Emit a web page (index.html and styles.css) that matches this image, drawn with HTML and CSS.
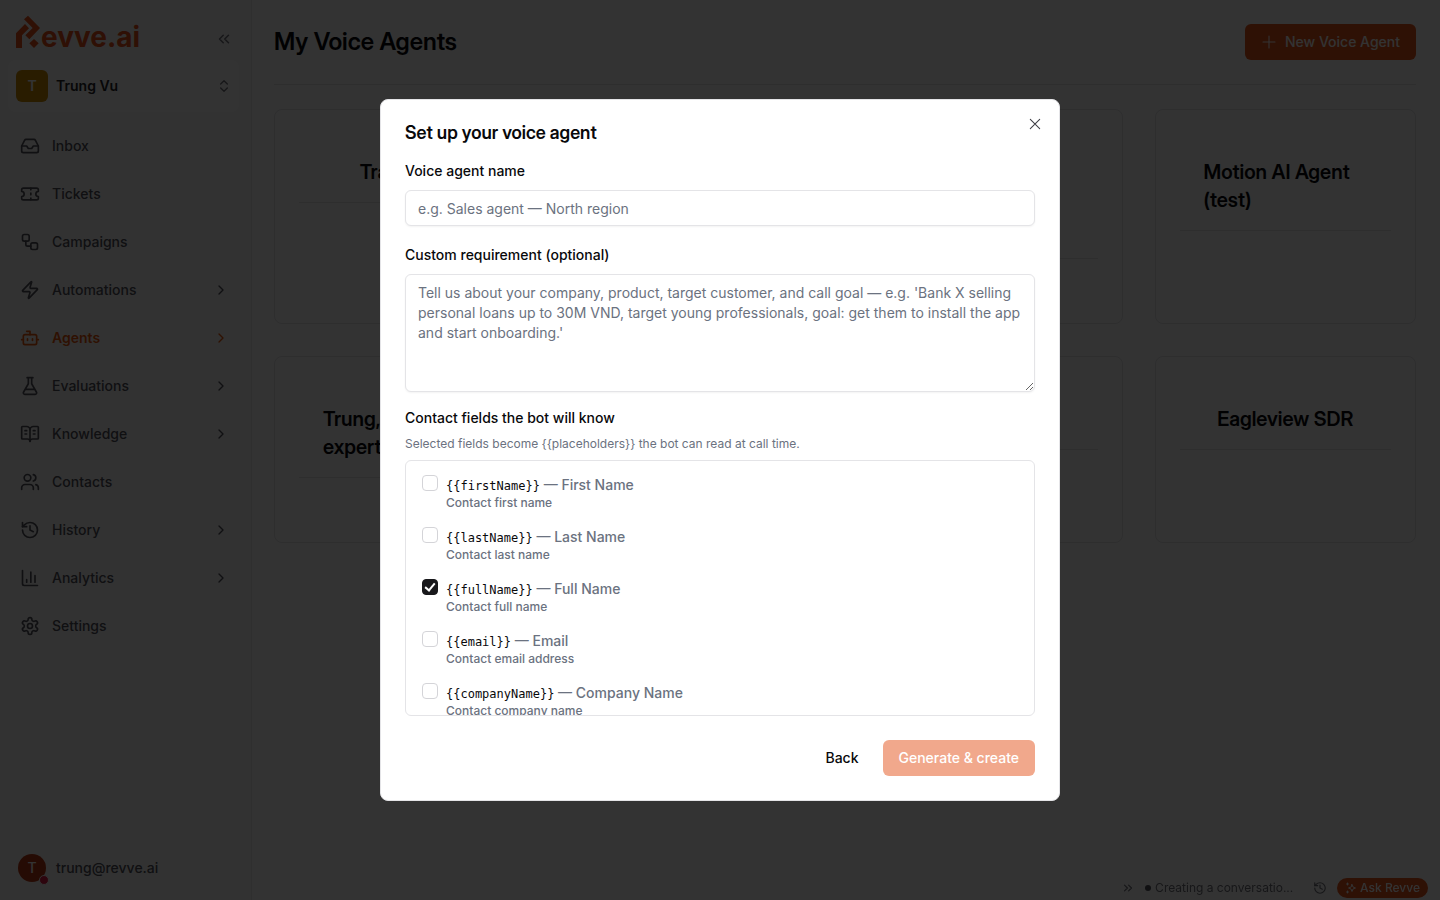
FILE: index.html
```html
<!DOCTYPE html>
<html lang="en">
<head>
  <meta charset="UTF-8" />
  <meta name="viewport" content="width=device-width, initial-scale=1" />
  <title>My Voice Agents</title>
  <link rel="stylesheet" href="styles.css">
</head>
<body>
  <div class="app">
    <aside class="sidebar">
      <div class="brand">
        <a href="#" class="logo">
          <svg viewBox="48 45 72 99" width="24" height="33"><path d="M72 58 84 47 120 84 88 118 76 106 98 84Z"/><path d="M75 72 87 85 66 106V144H48V100Z"/><path d="M102 117 116 130 102 144 88 130Z"/></svg>
          <span>evve.ai</span>
        </a>
        <button class="icon-btn" aria-label="Collapse sidebar">
          <svg class="icon" width="18" height="18" viewBox="0 0 24 24"><path d="m11 17-5-5 5-5M18 17l-5-5 5-5"/></svg>
        </button>
      </div>

      <button class="workspace">
        <span class="workspace-avatar">T</span>
        <span class="workspace-name">Trung Vu</span>
        <svg class="icon" width="16" height="16" viewBox="0 0 24 24"><path d="m7 15 5 5 5-5M7 9l5-5 5 5"/></svg>
      </button>

      <nav class="nav">
        <a href="#">
          <svg class="icon" width="20" height="20" viewBox="0 0 24 24"><path d="M22 12h-6l-2 3h-4l-2-3H2"/><path d="M5.45 5.11 2 12v6a2 2 0 0 0 2 2h16a2 2 0 0 0 2-2v-6l-3.45-6.89A2 2 0 0 0 16.76 4H7.24a2 2 0 0 0-1.79 1.11z"/></svg>
          <span>Inbox</span>
        </a>
        <a href="#">
          <svg class="icon" width="20" height="20" viewBox="0 0 24 24"><path d="M2 9a3 3 0 0 1 0 6v2a2 2 0 0 0 2 2h16a2 2 0 0 0 2-2v-2a3 3 0 0 1 0-6V7a2 2 0 0 0-2-2H4a2 2 0 0 0-2 2Z"/><path d="M13 5v2M13 17v2M13 11v2"/></svg>
          <span>Tickets</span>
        </a>
        <a href="#">
          <svg class="icon" width="20" height="20" viewBox="0 0 24 24"><rect width="8" height="8" x="3" y="3" rx="2"/><path d="M7 11v4a2 2 0 0 0 2 2h4"/><rect width="8" height="8" x="13" y="13" rx="2"/></svg>
          <span>Campaigns</span>
        </a>
        <a href="#">
          <svg class="icon" width="20" height="20" viewBox="0 0 24 24"><path d="M4 14a1 1 0 0 1-.78-1.63l9.9-10.2a.5.5 0 0 1 .86.46l-1.92 6.02A1 1 0 0 0 13 10h7a1 1 0 0 1 .78 1.63l-9.9 10.2a.5.5 0 0 1-.86-.46l1.92-6.02A1 1 0 0 0 11 14z"/></svg>
          <span>Automations</span>
          <svg class="icon" width="16" height="16" viewBox="0 0 24 24"><path d="m9 18 6-6-6-6"/></svg>
        </a>
        <a href="#" class="active">
          <svg class="icon" width="20" height="20" viewBox="0 0 24 24"><path d="M12 8V4H8"/><rect width="16" height="12" x="4" y="8" rx="2"/><path d="M2 14h2M20 14h2M15 13v2M9 13v2"/></svg>
          <span>Agents</span>
          <svg class="icon" width="16" height="16" viewBox="0 0 24 24"><path d="m9 18 6-6-6-6"/></svg>
        </a>
        <a href="#">
          <svg class="icon" width="20" height="20" viewBox="0 0 24 24"><path d="M10 2v7.31M14 9.3V2M8.5 2h7M14 9.3l5.8 10.2A1.7 1.7 0 0 1 18.3 22H5.7a1.7 1.7 0 0 1-1.5-2.5L10 9.3M6.5 16h11"/></svg>
          <span>Evaluations</span>
          <svg class="icon" width="16" height="16" viewBox="0 0 24 24"><path d="m9 18 6-6-6-6"/></svg>
        </a>
        <a href="#">
          <svg class="icon" width="20" height="20" viewBox="0 0 24 24"><path d="M12 7v14M16 12h2M16 8h2M6 12h2M6 8h2"/><path d="M3 18a1 1 0 0 1-1-1V4a1 1 0 0 1 1-1h5a4 4 0 0 1 4 4 4 4 0 0 1 4-4h5a1 1 0 0 1 1 1v13a1 1 0 0 1-1 1h-6a3 3 0 0 0-3 3 3 3 0 0 0-3-3z"/></svg>
          <span>Knowledge</span>
          <svg class="icon" width="16" height="16" viewBox="0 0 24 24"><path d="m9 18 6-6-6-6"/></svg>
        </a>
        <a href="#">
          <svg class="icon" width="20" height="20" viewBox="0 0 24 24"><path d="M16 21v-2a4 4 0 0 0-4-4H6a4 4 0 0 0-4 4v2"/><circle cx="9" cy="7" r="4"/><path d="M22 21v-2a4 4 0 0 0-3-3.87M16 3.13a4 4 0 0 1 0 7.75"/></svg>
          <span>Contacts</span>
        </a>
        <a href="#">
          <svg class="icon" width="20" height="20" viewBox="0 0 24 24"><path d="M3 12a9 9 0 1 0 9-9 9.75 9.75 0 0 0-6.74 2.74L3 8"/><path d="M3 3v5h5M12 7v5l4 2"/></svg>
          <span>History</span>
          <svg class="icon" width="16" height="16" viewBox="0 0 24 24"><path d="m9 18 6-6-6-6"/></svg>
        </a>
        <a href="#">
          <svg class="icon" width="20" height="20" viewBox="0 0 24 24"><path d="M3 3v16a2 2 0 0 0 2 2h16M18 17V9M13 17V5M8 17v-3"/></svg>
          <span>Analytics</span>
          <svg class="icon" width="16" height="16" viewBox="0 0 24 24"><path d="m9 18 6-6-6-6"/></svg>
        </a>
        <a href="#">
          <svg class="icon" width="20" height="20" viewBox="0 0 24 24"><path d="M12.22 2h-.44a2 2 0 0 0-2 2v.18a2 2 0 0 1-1 1.73l-.43.25a2 2 0 0 1-2 0l-.15-.08a2 2 0 0 0-2.73.73l-.22.38a2 2 0 0 0 .73 2.73l.15.1a2 2 0 0 1 1 1.72v.51a2 2 0 0 1-1 1.74l-.15.09a2 2 0 0 0-.73 2.73l.22.38a2 2 0 0 0 2.73.73l.15-.08a2 2 0 0 1 2 0l.43.25a2 2 0 0 1 1 1.73V20a2 2 0 0 0 2 2h.44a2 2 0 0 0 2-2v-.18a2 2 0 0 1 1-1.73l.43-.25a2 2 0 0 1 2 0l.15.08a2 2 0 0 0 2.73-.73l.22-.39a2 2 0 0 0-.73-2.73l-.15-.08a2 2 0 0 1-1-1.74v-.5a2 2 0 0 1 1-1.74l.15-.09a2 2 0 0 0 .73-2.73l-.22-.38a2 2 0 0 0-2.73-.73l-.15.08a2 2 0 0 1-2 0l-.43-.25a2 2 0 0 1-1-1.73V4a2 2 0 0 0-2-2z"/><circle cx="12" cy="12" r="3"/></svg>
          <span>Settings</span>
        </a>
      </nav>

      <button class="account">
        <span class="account-avatar">T<i class="status"></i></span>
        <span>trung@revve.ai</span>
      </button>
    </aside>

    <main class="main">
      <header class="page-header">
        <h1>My Voice Agents</h1>
        <button class="btn btn-primary">
          <svg class="icon thin" width="16" height="16" viewBox="0 0 24 24"><path d="M3 12h18M12 3v18"/></svg>
          New Voice Agent
        </button>
      </header>

      <section class="cards">
        <article class="card"><h2>Travel Bot</h2></article>
        <article class="card"><h2>Sales Agent</h2></article>
        <article class="card"><h2>Customer Support Voice Agent</h2></article>
        <article class="card"><h2>Motion AI Agent (test)</h2></article>
        <article class="card"><h2>Trung, product expert</h2></article>
        <article class="card"><h2>Voice Agent</h2></article>
        <article class="card"><h2>Demo Agent</h2></article>
        <article class="card"><h2>Eagleview SDR</h2></article>
      </section>
    </main>
  </div>

  <div class="dock">
    <svg class="icon" width="14" height="14" viewBox="0 0 24 24"><path d="m6 17 5-5-5-5M13 17l5-5-5-5"/></svg>
    <span class="dock-task">Creating a conversatio...</span>
    <svg class="icon" width="14" height="14" viewBox="0 0 24 24"><path d="M3 12a9 9 0 1 0 9-9 9.75 9.75 0 0 0-6.74 2.74L3 8"/><path d="M3 3v5h5M12 7v5l4 2"/></svg>
    <button class="ask">
      <svg class="icon" width="12" height="12" viewBox="0 0 24 24"><path d="m14 5 2 5 5 2-5 2-2 5-2-5-5-2 5-2zM5 2v4M3 4h4M5 18v4M3 20h4"/></svg>
      Ask Revve
    </button>
  </div>

  <div class="overlay">
    <form class="modal" role="dialog" aria-labelledby="modal-title">
      <button type="button" class="close" aria-label="Close">
        <svg class="icon thin" width="16" height="16" viewBox="0 0 24 24"><path d="M19 5 5 19M5 5l14 14"/></svg>
      </button>
      <h2 id="modal-title">Set up your voice agent</h2>

      <div class="field">
        <label for="agent-name">Voice agent name</label>
        <input type="text" id="agent-name" placeholder="e.g. Sales agent — North region" />
      </div>

      <div class="field">
        <label for="requirement">Custom requirement (optional)</label>
        <textarea id="requirement" placeholder="Tell us about your company, product, target customer, and call goal — e.g. 'Bank X selling personal loans up to 30M VND, target young professionals, goal: get them to install the app and start onboarding.'"></textarea>
      </div>

      <fieldset>
        <legend>Contact fields the bot will know</legend>
        <p class="hint">Selected fields become {{placeholders}} the bot can read at call time.</p>
        <div class="options">
          <label class="option">
            <input type="checkbox" name="fields" value="firstName" />
            <span><code>{{firstName}}</code> — First Name<small>Contact first name</small></span>
          </label>
          <label class="option">
            <input type="checkbox" name="fields" value="lastName" />
            <span><code>{{lastName}}</code> — Last Name<small>Contact last name</small></span>
          </label>
          <label class="option">
            <input type="checkbox" name="fields" value="fullName" checked />
            <span><code>{{fullName}}</code> — Full Name<small>Contact full name</small></span>
          </label>
          <label class="option">
            <input type="checkbox" name="fields" value="email" />
            <span><code>{{email}}</code> — Email<small>Contact email address</small></span>
          </label>
          <label class="option">
            <input type="checkbox" name="fields" value="companyName" />
            <span><code>{{companyName}}</code> — Company Name<small>Contact company name</small></span>
          </label>
        </div>
      </fieldset>

      <div class="actions">
        <button type="button" class="btn btn-ghost">Back</button>
        <button type="submit" class="btn btn-primary" disabled>Generate &amp; create</button>
      </div>
    </form>
  </div>
</body>
</html>
```

FILE: styles.css
```css
* {
  box-sizing: border-box;
}
body {
  margin: 0;
  background: #fff;
  color: #09090b;
  font-family: Inter, 'Liberation Sans', sans-serif;
  font-size: 14px;
  line-height: 20px;
}
h1, h2, p {
  margin: 0;
}
h1, h2 {
  font-family: 'Inter Display', Inter, 'Liberation Sans', sans-serif;
  font-weight: 600;
  font-variation-settings: 'opsz' 32;
}
a {
  color: inherit;
  text-decoration: none;
}
button, input, textarea {
  font: inherit;
  color: inherit;
}
button {
  border: none;
  background: none;
  padding: 0;
  cursor: pointer;
}
.icon {
  flex: none;
  fill: none;
  stroke: currentColor;
  stroke-width: 2;
  stroke-linecap: round;
  stroke-linejoin: round;
}
.icon.thin {
  stroke-width: 1.6;
}

/* layout */
.app {
  display: flex;
  min-height: 100vh;
}
.sidebar {
  display: flex;
  flex-direction: column;
  width: 252px;
  padding: 8px 12px 8px 8px;
  background: #fafafa;
  border-right: 1px solid #e8e8ea;
  color: #52525b;
}
.main {
  flex: 1;
  min-width: 0;
  padding: 24px 24px 24px 22px;
}

/* sidebar */
.brand {
  display: flex;
  justify-content: space-between;
  align-items: flex-end;
  height: 40px;
  margin-bottom: 12px;
  padding: 0 6px 0 8px;
}
.logo {
  display: flex;
  align-items: flex-end;
  gap: 1px;
  color: #e8501c;
  fill: #e8501c;
  font-size: 28px;
  font-weight: 700;
  line-height: 22px;
}
.icon-btn {
  display: flex;
  color: #71717a;
}
.workspace {
  display: flex;
  align-items: center;
  gap: 8px;
  height: 52px;
  padding: 0 7px 0 8px;
  border-radius: 8px;
  background: #fff;
  color: #71717a;
  text-align: left;
}
.workspace-avatar {
  display: grid;
  place-items: center;
  width: 32px;
  height: 32px;
  border-radius: 6px;
  background: #ca8a04;
  color: #fff;
  font-weight: 600;
}
.workspace-name {
  flex: 1;
  color: #27272a;
  font-weight: 600;
}
.nav {
  display: flex;
  flex-direction: column;
  gap: 8px;
  margin-top: 14px;
}
.nav a {
  display: flex;
  align-items: center;
  gap: 12px;
  height: 40px;
  padding: 0 10px 0 12px;
  border-radius: 6px;
  font-weight: 500;
}
.nav span {
  flex: 1;
}
.nav .active {
  color: #ea580c;
  font-weight: 600;
}
.account {
  display: flex;
  align-items: center;
  gap: 10px;
  height: 48px;
  margin-top: auto;
  padding: 0 10px;
  font-weight: 500;
}
.account-avatar {
  position: relative;
  display: grid;
  place-items: center;
  width: 28px;
  height: 28px;
  border-radius: 50%;
  background: #b93815;
  color: #fff;
}
.status {
  position: absolute;
  right: -3px;
  bottom: -3px;
  width: 10px;
  height: 10px;
  border: 1px solid #fafafa;
  border-radius: 50%;
  background: #e11d48;
}

/* page */
.page-header {
  display: flex;
  justify-content: space-between;
  align-items: center;
  padding-bottom: 24px;
  border-bottom: 1px solid #e4e4e7;
}
h1 {
  font-size: 24px;
  line-height: 32px;
}
.btn {
  display: inline-flex;
  align-items: center;
  justify-content: center;
  gap: 8px;
  height: 36px;
  padding: 0 16px;
  border-radius: 6px;
  font-weight: 500;
}
.btn-primary {
  background: #e5541b;
  color: #fff;
}
.btn:disabled {
  opacity: 0.5;
}
.cards {
  display: grid;
  grid-template-columns: repeat(4, 1fr);
  gap: 32px;
  margin-top: 24px;
}
.card {
  padding: 24px 24px 64px;
  border: 1px solid #e4e4e7;
  border-radius: 8px;
}
.card h2 {
  display: flex;
  justify-content: center;
  padding: 24px 24px 16px;
  border-bottom: 1px solid #e4e4e7;
  font-size: 20px;
  line-height: 28px;
}

/* assistant dock */
.dock {
  position: fixed;
  right: 12px;
  bottom: 2px;
  display: flex;
  align-items: center;
  gap: 10px;
  height: 20px;
  color: #71717a;
  font-size: 12px;
}
.dock-task {
  display: flex;
  align-items: center;
  gap: 4px;
  width: 158px;
}
.dock-task::before {
  content: "";
  width: 6px;
  height: 6px;
  border-radius: 50%;
  background: #52525b;
}
.ask {
  display: flex;
  align-items: center;
  gap: 3px;
  height: 20px;
  padding: 0 8px;
  border-radius: 10px;
  background: #e5541b;
  color: #fff;
  font-weight: 500;
}

/* dialog */
.overlay {
  position: fixed;
  inset: 0;
  display: flex;
  align-items: center;
  justify-content: center;
  background: rgba(0, 0, 0, 0.8);
}
.modal {
  position: relative;
  display: flex;
  flex-direction: column;
  gap: 16px;
  width: 100%;
  max-width: 680px;
  padding: 24px;
  border: 1px solid #e4e4e7;
  border-radius: 8px;
  background: #fff;
}
.modal h2 {
  font-size: 18px;
  line-height: 18px;
}
.close {
  position: absolute;
  top: 16px;
  right: 16px;
  display: flex;
  color: #3f3f46;
}
.field {
  display: flex;
  flex-direction: column;
  gap: 8px;
}
.field label {
  padding-top: 2px;
  line-height: 22px;
  font-weight: 500;
}
.field input,
.field textarea {
  display: block;
  width: 100%;
  height: 36px;
  padding: 8px 12px;
  border: 1px solid #e4e4e7;
  border-radius: 6px;
  background: #fff;
  box-shadow: 0 1px 2px rgba(0, 0, 0, 0.05);
  font-variation-settings: 'opsz' 22;
}
.field textarea {
  height: 118px;
  resize: vertical;
}
::placeholder {
  color: #6b7280;
}
fieldset {
  min-width: 0;
  margin: 0;
  padding: 0;
  border: none;
}
legend {
  padding: 0;
  font-weight: 500;
}
.hint {
  margin: 8px 0;
  color: #6b7280;
  font-size: 12px;
  line-height: 16px;
}
.options {
  display: flex;
  flex-direction: column;
  gap: 16px;
  height: 256px;
  padding: 14px 16px;
  border: 1px solid #e4e4e7;
  border-radius: 6px;
  overflow-y: auto;
  scrollbar-width: none;
}
.option {
  display: flex;
  align-items: flex-start;
  gap: 8px;
  color: #6b7280;
  font-weight: 500;
}
.option input {
  appearance: none;
  flex: none;
  width: 16px;
  height: 16px;
  margin: 0;
  border: 1px solid #d4d4d8;
  border-radius: 4px;
  background: #fff;
}
.option input:checked {
  position: relative;
  border-color: #18181b;
  background: #18181b;
}
.option input:checked::after {
  content: "";
  position: absolute;
  left: 4px;
  top: 1px;
  width: 6px;
  height: 10px;
  border: solid #fff;
  border-width: 0 2px 2px 0;
  box-sizing: border-box;
  transform: rotate(40deg);
}
.option code {
  color: #09090b;
  font-family: 'DejaVu Sans Mono', monospace;
  font-size: 12px;
  line-height: 12px;
  font-weight: 400;
}
.option small {
  display: block;
  font-size: 12px;
  line-height: 16px;
}
.actions {
  display: flex;
  justify-content: flex-end;
  gap: 8px;
  margin-top: 8px;
}
```
